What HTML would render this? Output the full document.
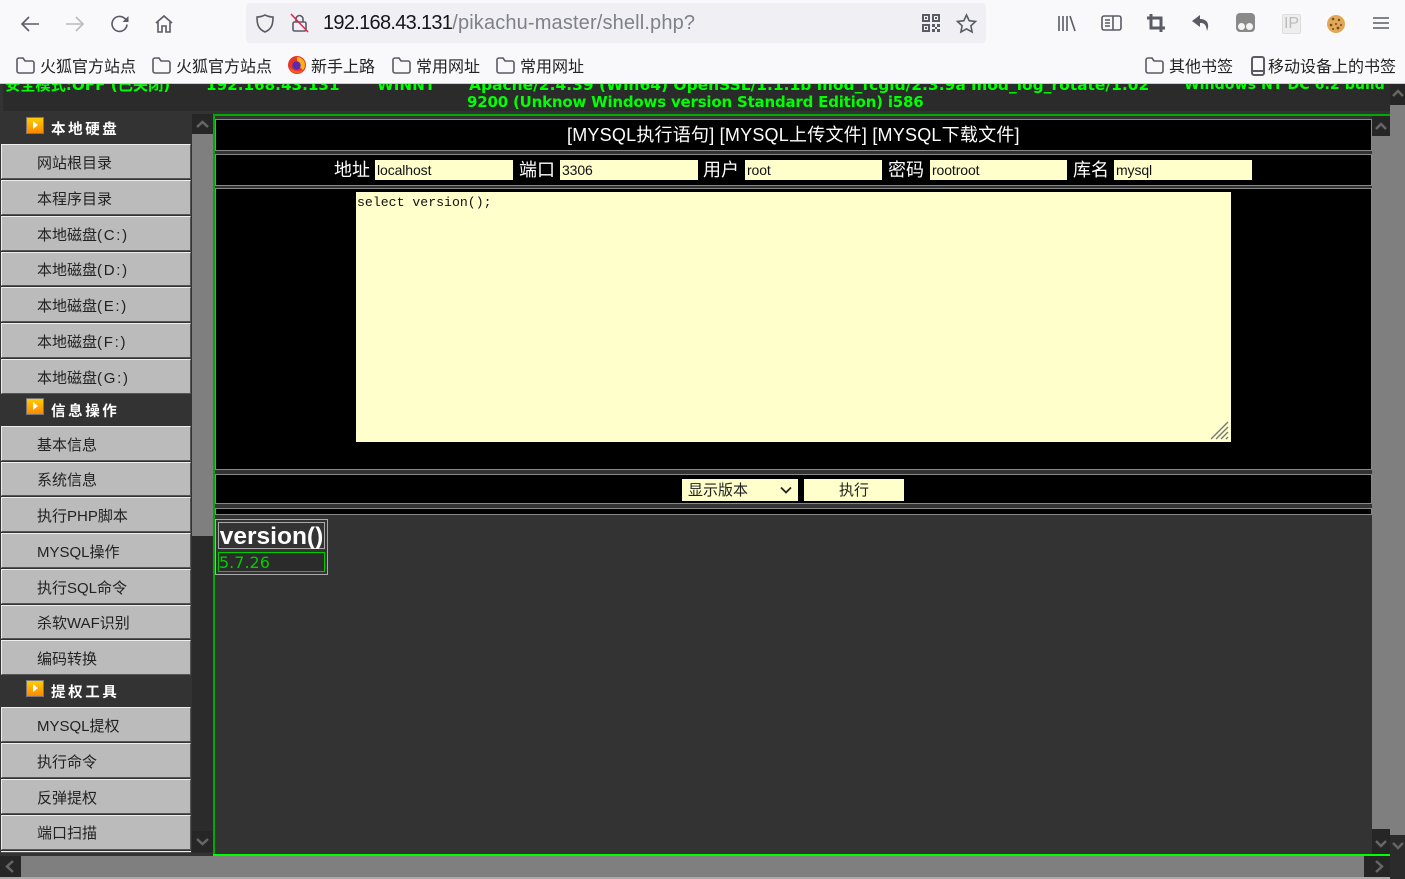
<!DOCTYPE html>
<html><head><meta charset="utf-8"><style>
html,body{margin:0;padding:0;width:1405px;height:879px;overflow:hidden;background:#333;font-family:"Liberation Sans","Noto Sans CJK SC",sans-serif}
.a{position:absolute;white-space:nowrap}
.b{position:absolute;white-space:nowrap;font-size:16px;line-height:20px;color:#222;top:58px}
.g{position:absolute;white-space:nowrap;font:bold 15.2px/20px "DejaVu Sans","Noto Sans CJK SC",sans-serif;color:#0f0}
.it{position:absolute;left:1px;width:188px;background:#bbb;border:1px solid;border-color:#eee #555 #555 #eee;box-sizing:content-box;font-size:15px;color:#222;padding-left:0}
.it span{position:absolute;left:35px;top:0;line-height:37px;white-space:nowrap}
.it b{font-weight:normal;letter-spacing:1.7px}
.h{position:absolute;left:0;width:191px;background:#333}
.h span{position:absolute;left:51px;top:6px;font-size:14.5px;font-weight:bold;color:#fff;letter-spacing:2.6px;line-height:20px;white-space:nowrap}
.h i{position:absolute;left:26px;top:3px;width:16px;height:15px;border:1px solid #777;background:linear-gradient(#fc0,#f80)}
.h i:after{content:"";position:absolute;left:6px;top:3px;border-left:5px solid #fff;border-top:4px solid transparent;border-bottom:4px solid transparent}
.p{position:absolute;left:215px;width:1155px;background:#000;border:1px solid #888}
.l{position:absolute;top:158px;font-size:18px;line-height:24px;color:#fff;white-space:nowrap}
.f{position:absolute;top:160px;height:20px;background:#ffc;font-size:14px;line-height:21px;color:#111;padding-left:2px;box-sizing:border-box;letter-spacing:-.1px}
svg{position:absolute;overflow:visible}
.ic{fill:none;stroke:#5b5b66;stroke-width:1.6}
.sb{position:absolute;background:#262626}
</style></head><body>

<!-- page -->
<div class="a" style="left:0;top:84px;width:1405px;height:30px;background:#333"></div>
<div class="a" style="left:3px;top:84px;width:1387px;height:27px;background:#2b2b2b"></div>
<div class="g" style="left:5px;top:75px">安全模式:OFF (已关闭)</div>
<div class="g" style="left:206px;top:75px">192.168.43.131</div>
<div class="g" style="left:377px;top:75px">WINNT</div>
<div class="g" style="left:469px;top:75px;font-size:15.47px">Apache/2.4.39 (Win64) OpenSSL/1.1.1b mod_fcgid/2.3.9a mod_log_rotate/1.02</div>
<div class="g" style="left:1184px;top:75px;font-size:14.2px">Windows NT DC 6.2 build</div>
<div class="g" style="left:467px;top:92px;font-size:15px;letter-spacing:-.2px">9200 (Unknow Windows version Standard Edition) i586</div>

<!-- outer right scrollbar -->
<div class="a" style="left:1390px;top:84px;width:15px;height:795px;background:#7f7f7f"></div>
<div class="sb" style="left:1390px;top:84px;width:15px;height:21px"></div>
<div class="sb" style="left:1390px;top:835px;width:15px;height:44px;background:#2b2b2b"></div>
<svg style="left:1390px;top:84px" width="15" height="21"><path d="M3 12l5-5 5 5" fill="none" stroke="#666" stroke-width="2.5"/></svg>
<svg style="left:1390px;top:835px" width="15" height="20"><path d="M3 8l5 5 5-5" fill="none" stroke="#666" stroke-width="2.5"/></svg>

<!-- sidebar -->
<div class="a" style="left:0;top:111px;width:192px;height:744px;background:#333"></div>
<div class="a" style="left:192px;top:114px;width:21px;height:741px;background:#2b2b2b"></div>
<div class="a" style="left:192px;top:134px;width:21px;height:402px;background:#7f7f7f"></div>
<div class="sb" style="left:192px;top:114px;width:21px;height:20px"></div>
<div class="sb" style="left:192px;top:831px;width:21px;height:21px"></div>
<svg style="left:192px;top:114px" width="21" height="20"><path d="M5 13l5.500-5 5.500 5" fill="none" stroke="#666" stroke-width="2.500"/></svg>
<svg style="left:192px;top:831px" width="21" height="21"><path d="M5 8l5.500 5 5.500-5" fill="none" stroke="#666" stroke-width="2.500"/></svg>

<div class="h" style="top:114px;height:30px"><i></i><span>本地硬盘</span></div>
<div class="it" style="top:144px;height:33px"><span>网站根目录</span></div>
<div class="it" style="top:180px;height:33px"><span>本程序目录</span></div>
<div class="it" style="top:216px;height:33px"><span>本地磁盘<b>(C:)</b></span></div>
<div class="it" style="top:252px;height:32px"><span style="top:-1px">本地磁盘<b>(D:)</b></span></div>
<div class="it" style="top:287px;height:33px"><span>本地磁盘<b>(E:)</b></span></div>
<div class="it" style="top:323px;height:33px"><span>本地磁盘<b>(F:)</b></span></div>
<div class="it" style="top:359px;height:33px"><span>本地磁盘<b>(G:)</b></span></div>
<div class="h" style="top:395px;height:31px"><i style="top:3px"></i><span style="top:7px">信息操作</span></div>
<div class="it" style="top:426px;height:33px"><span>基本信息</span></div>
<div class="it" style="top:462px;height:32px"><span style="top:-1px">系统信息</span></div>
<div class="it" style="top:497px;height:33px"><span>执行PHP脚本</span></div>
<div class="it" style="top:533px;height:33px"><span>MYSQL操作</span></div>
<div class="it" style="top:569px;height:33px"><span>执行SQL命令</span></div>
<div class="it" style="top:605px;height:32px"><span style="top:-1px">杀软WAF识别</span></div>
<div class="it" style="top:640px;height:33px"><span>编码转换</span></div>
<div class="h" style="top:676px;height:31px"><i style="top:4px"></i><span style="top:7px">提权工具</span></div>
<div class="it" style="top:707px;height:33px"><span>MYSQL提权</span></div>
<div class="it" style="top:743px;height:33px"><span>执行命令</span></div>
<div class="it" style="top:779px;height:33px"><span>反弹提权</span></div>
<div class="it" style="top:815px;height:33px"><span style="top:-1px">端口扫描</span></div>
<div class="a" style="left:1px;top:851px;width:190px;height:1px;background:#eee"></div>
<div class="a" style="left:1px;top:852px;width:190px;height:1px;background:#555"></div>

<!-- main frame -->
<div class="a" style="left:213px;top:114px;width:1177px;height:2px;background:#0a0"></div>
<div class="a" style="left:213px;top:114px;width:2px;height:742px;background:#0a0"></div>
<div class="a" style="left:215px;top:116px;width:1157px;height:738px;background:#333"></div>
<div class="a" style="left:1372px;top:116px;width:18px;height:738px;background:#7f7f7f"></div>
<div class="sb" style="left:1372px;top:116px;width:18px;height:20px"></div>
<div class="sb" style="left:1372px;top:829px;width:18px;height:25px"></div>
<svg style="left:1372px;top:116px" width="18" height="20"><path d="M4 13l5-5 5 5" fill="none" stroke="#666" stroke-width="2.500"/></svg>
<svg style="left:1372px;top:829px" width="18" height="25"><path d="M4 12l5 5 5-5" fill="none" stroke="#666" stroke-width="2.500"/></svg>

<div class="p" style="top:119px;height:30px"></div>
<div class="a" style="left:567px;top:123px;font-size:18px;line-height:24px;color:#fff;letter-spacing:.22px">[MYSQL执行语句] [MYSQL上传文件] [MYSQL下载文件]</div>
<div class="p" style="top:154px;height:30px"></div>
<div class="l" style="left:334px">地址</div><div class="f" style="left:375px;width:138px">localhost</div>
<div class="l" style="left:519px">端口</div><div class="f" style="left:560px;width:138px">3306</div>
<div class="l" style="left:703px">用户</div><div class="f" style="left:745px;width:137px">root</div>
<div class="l" style="left:888px">密码</div><div class="f" style="left:930px;width:137px">rootroot</div>
<div class="l" style="left:1073px">库名</div><div class="f" style="left:1114px;width:138px">mysql</div>

<div class="p" style="top:188px;height:280px"></div>
<div class="a" style="left:356px;top:192px;width:875px;height:250px;background:#ffc;font:13.2px/21px 'Liberation Mono',monospace;color:#111;padding-left:1px;box-sizing:border-box">select version();</div>
<svg style="left:1209px;top:420px" width="22" height="22"><path d="M2 19L19 2M7 19L19 7M12 19l7-7M17 19l2-2" stroke="#777" stroke-width="1.400" fill="none"/></svg>

<div class="p" style="top:474px;height:28px"></div>
<div class="a" style="left:682px;top:479px;width:116px;height:22px;background:#ffc;font-size:15px;line-height:24px;color:#222;padding-left:6px;box-sizing:border-box">显示版本</div>
<svg style="left:780px;top:486px" width="12" height="8"><path d="M1 1.500l5 5 5-5" fill="none" stroke="#222" stroke-width="1.800"/></svg>
<div class="a" style="left:804px;top:479px;width:100px;height:22px;background:#ffc;font-size:15px;line-height:24px;color:#222;text-align:center">执行</div>
<div class="p" style="top:508px;height:5px"></div>

<div class="a" style="left:215px;top:519px;width:111px;height:54px;border:1px solid #aaa"></div>
<div class="a" style="left:218px;top:522px;width:105px;height:25px;border:1px solid #aaa;font:bold 24.5px/28px 'Liberation Sans',sans-serif;color:#fff;text-align:center">version()</div>
<div class="a" style="left:218px;top:552px;width:105px;height:18px;border:1px solid #0c0;background:#2b2b2b;font:16px/20px 'DejaVu Sans',sans-serif;color:#0c0">5.7.26</div>

<!-- bottom -->
<div class="a" style="left:213px;top:854px;width:1177px;height:2px;background:#0f0"></div>
<div class="a" style="left:0;top:853px;width:213px;height:3px;background:#333"></div>
<div class="a" style="left:0;top:856px;width:1390px;height:21px;background:#7f7f7f"></div>
<div class="sb" style="left:0;top:856px;width:21px;height:21px"></div>
<div class="sb" style="left:1364px;top:856px;width:26px;height:21px"></div>
<svg style="left:0;top:856px" width="21" height="21"><path d="M13 5l-6 5.500 6 5.500" fill="none" stroke="#666" stroke-width="2.500"/></svg>
<svg style="left:1364px;top:856px" width="26" height="21"><path d="M12 5l6 5.500-6 5.500" fill="none" stroke="#666" stroke-width="2.500"/></svg>
<div class="a" style="left:0;top:877px;width:1405px;height:2px;background:#aaa"></div>
<div class="a" style="left:1390px;top:855px;width:15px;height:24px;background:#2b2b2b"></div>

<!-- browser chrome -->
<div class="a" style="left:0;top:0;width:1405px;height:83px;background:#f9f9fb;border-bottom:1px solid #ccc"></div>
<div class="a" style="left:246px;top:3px;width:740px;height:40px;border-radius:4px;background:#f0f0f4"></div>
<svg class="ic" style="left:20px;top:14px" width="20" height="20"><path d="M19 10H2M9 3l-7 7 7 7"/></svg>
<svg class="ic" style="left:65px;top:14px;stroke:#bbb" width="20" height="20"><path d="M1 10h17M11 3l7 7-7 7"/></svg>
<svg class="ic" style="left:110px;top:14px" width="20" height="20"><path d="M17 10.500a7.500 7.500 0 1 1-2.500-6.200L18 7"/><path d="M18.500 2v6h-6" style="fill:#5b5b66;stroke:none"/></svg>
<svg class="ic" style="left:154px;top:14px" width="20" height="20"><path d="M2 9l8-7 8 7M4 8v10h4v-6h4v6h4V8"/></svg>
<svg class="ic" style="left:255px;top:13px" width="20" height="21"><path d="M10 2c3 1.500 5 2 8 2 0 7-1 12-8 15C3 16 2 11 2 4c3 0 5-.500 8-2z"/></svg>
<svg class="ic" style="left:290px;top:13px" width="20" height="20"><rect x="3" y="9" width="13" height="9" rx="1.500"/><path d="M6 9V6a3.500 3.500 0 0 1 7 0v3"/><path d="M1 1l17 18" style="stroke:#e22850"/></svg>
<div class="a" style="left:323px;top:11px;font-size:20px;line-height:25px;color:#15141a"><span style="letter-spacing:-.7px">192.168.43.131</span><span style="color:#80808a;letter-spacing:.15px">/pikachu-master/shell.php?</span></div>
<svg style="left:922px;top:14px" width="18" height="19"><path d="M0 0h8v8H0zM2 2v4h4V2zM10 0h8v8h-8zM12 2v4h4V2zM0 10h8v8H0zM2 12v4h4v-4zM3 3h2v2H3zM13 3h2v2h-2zM3 13h2v2H3zM10 10h3v3h-3zM15 10h3v3h-3zM10 15h3v3h-3zM15 15h3v3h-3zM13 13h2v2h-2z" fill="#5b5b66" fill-rule="evenodd"/></svg>
<svg class="ic" style="left:956px;top:13px" width="21" height="20"><path d="M10.500 2l2.700 5.700 6.300.8-4.600 4.300 1.200 6.200-5.600-3.100-5.600 3.100 1.200-6.200L1.500 8.500l6.300-.8z"/></svg>
<svg class="ic" style="left:1058px;top:15px" width="18" height="17"><path d="M1 1v15M5 1v15M9 1v15M12 1l5 15"/></svg>
<svg class="ic" style="left:1101px;top:15px" width="20" height="16"><rect x="1" y="1" width="19" height="14" rx="2"/><path d="M12 1v14M4 5h5M4 8h5M4 11h5"/></svg>
<svg style="left:1147px;top:14px" width="18" height="18" fill="none" stroke="#5b5b66" stroke-width="3"><path d="M0 4h14v14M4 0v14h14"/></svg>
<svg style="left:1192px;top:15px" width="19" height="17"><path d="M8 0L0 6l8 6V8c4 0 6 1 7 8 3-7 0-12-7-12z" fill="#5b5b66"/></svg>
<div class="a" style="left:1236px;top:13px;width:19px;height:19px;border-radius:4px;background:#8a8a8a"></div>
<div class="a" style="left:1238px;top:23px;width:7px;height:7px;border-radius:50%;background:#f4f4f4"></div>
<div class="a" style="left:1246px;top:23px;width:7px;height:7px;border-radius:50%;background:#f4f4f4"></div>
<div class="a" style="left:1282px;top:14px;width:17px;height:18px;border:1px solid #ddd;border-radius:2px;background:#eee;color:#bbb;font-size:16px;line-height:18px;text-align:center">IP</div>
<div class="a" style="left:1327px;top:15px;width:18px;height:18px;border-radius:50%;background:#e0a858"></div>
<svg style="left:1327px;top:15px" width="18" height="18" fill="#7a4a18"><circle cx="6" cy="4" r="1.300"/><circle cx="12" cy="5" r="1.200"/><circle cx="4" cy="10" r="1.300"/><circle cx="11" cy="13" r="1.400"/><circle cx="9" cy="9" r="1"/><circle cx="14" cy="10" r="1"/><circle cx="6" cy="14" r="1"/></svg>
<svg class="ic" style="left:1373px;top:16px" width="16" height="14"><path d="M0 2h16M0 7h16M0 12h16"/></svg>

<!-- bookmarks -->
<svg class="ic" style="left:16px;top:57px" width="19" height="17"><path d="M1 3a2 2 0 0 1 2-2h4l2 3h7a2 2 0 0 1 2 2v8a2 2 0 0 1-2 2H3a2 2 0 0 1-2-2z"/></svg>
<div class="b" style="left:40px">火狐官方站点</div>
<svg class="ic" style="left:152px;top:57px" width="19" height="17"><path d="M1 3a2 2 0 0 1 2-2h4l2 3h7a2 2 0 0 1 2 2v8a2 2 0 0 1-2 2H3a2 2 0 0 1-2-2z"/></svg>
<div class="b" style="left:176px">火狐官方站点</div>
<svg style="left:288px;top:56px" width="18" height="18"><circle cx="9" cy="9" r="9" fill="#e8352a"/><path d="M9 1a8 8 0 0 1 8 8c0 2-1 4-2 5l-6-5z" fill="#fbb016"/><circle cx="8.500" cy="9.500" r="4.200" fill="#5a2ab0"/><path d="M1 11c1 4 4 6 8 6 3 0 5-1 6-3-3 2-9 2-14-3z" fill="#f0641e"/></svg>
<div class="b" style="left:311px">新手上路</div>
<svg class="ic" style="left:392px;top:57px" width="19" height="17"><path d="M1 3a2 2 0 0 1 2-2h4l2 3h7a2 2 0 0 1 2 2v8a2 2 0 0 1-2 2H3a2 2 0 0 1-2-2z"/></svg>
<div class="b" style="left:416px">常用网址</div>
<svg class="ic" style="left:496px;top:57px" width="19" height="17"><path d="M1 3a2 2 0 0 1 2-2h4l2 3h7a2 2 0 0 1 2 2v8a2 2 0 0 1-2 2H3a2 2 0 0 1-2-2z"/></svg>
<div class="b" style="left:520px">常用网址</div>
<svg class="ic" style="left:1145px;top:57px" width="19" height="17"><path d="M1 3a2 2 0 0 1 2-2h4l2 3h7a2 2 0 0 1 2 2v8a2 2 0 0 1-2 2H3a2 2 0 0 1-2-2z"/></svg>
<div class="b" style="left:1169px">其他书签</div>
<svg class="ic" style="left:1251px;top:56px;stroke-width:2" width="14" height="20"><rect x="1" y="1" width="12" height="18" rx="2"/><path d="M1 15h12"/></svg>
<div class="b" style="left:1268px">移动设备上的书签</div>
</body></html>
